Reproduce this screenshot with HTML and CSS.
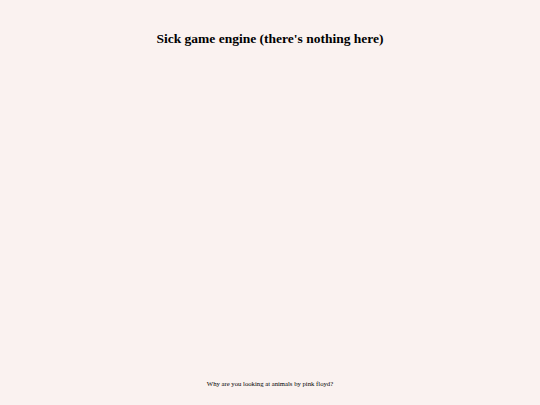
FILE: index.html
```html
<!DOCTYPE html>
<html>
<head>
<meta charset="utf-8">
<link rel="stylesheet" href="styles.css">
</head>
<body>
<div class="page">
  <h1 class="title">Sick game engine (there's nothing here)</h1>
  <p class="footer">Why are you looking at animals by pink floyd?</p>
</div>
</body>
</html>
```
FILE: styles.css
```css
html, body {
  margin: 0;
  padding: 0;
  background: #faf2f0;
}
.page {
  height: 405px;
  display: flex;
  flex-direction: column;
  align-items: center;
  justify-content: space-between;
  font-family: "Liberation Serif", "Times New Roman", serif;
  color: #000;
}
.title {
  margin: 31px 0 0;
  font-size: 13.5px;
  line-height: 16px;
  font-weight: bold;
}
.footer {
  margin: 0 0 17px;
  font-size: 6.7px;
  line-height: 9px;
}
```
